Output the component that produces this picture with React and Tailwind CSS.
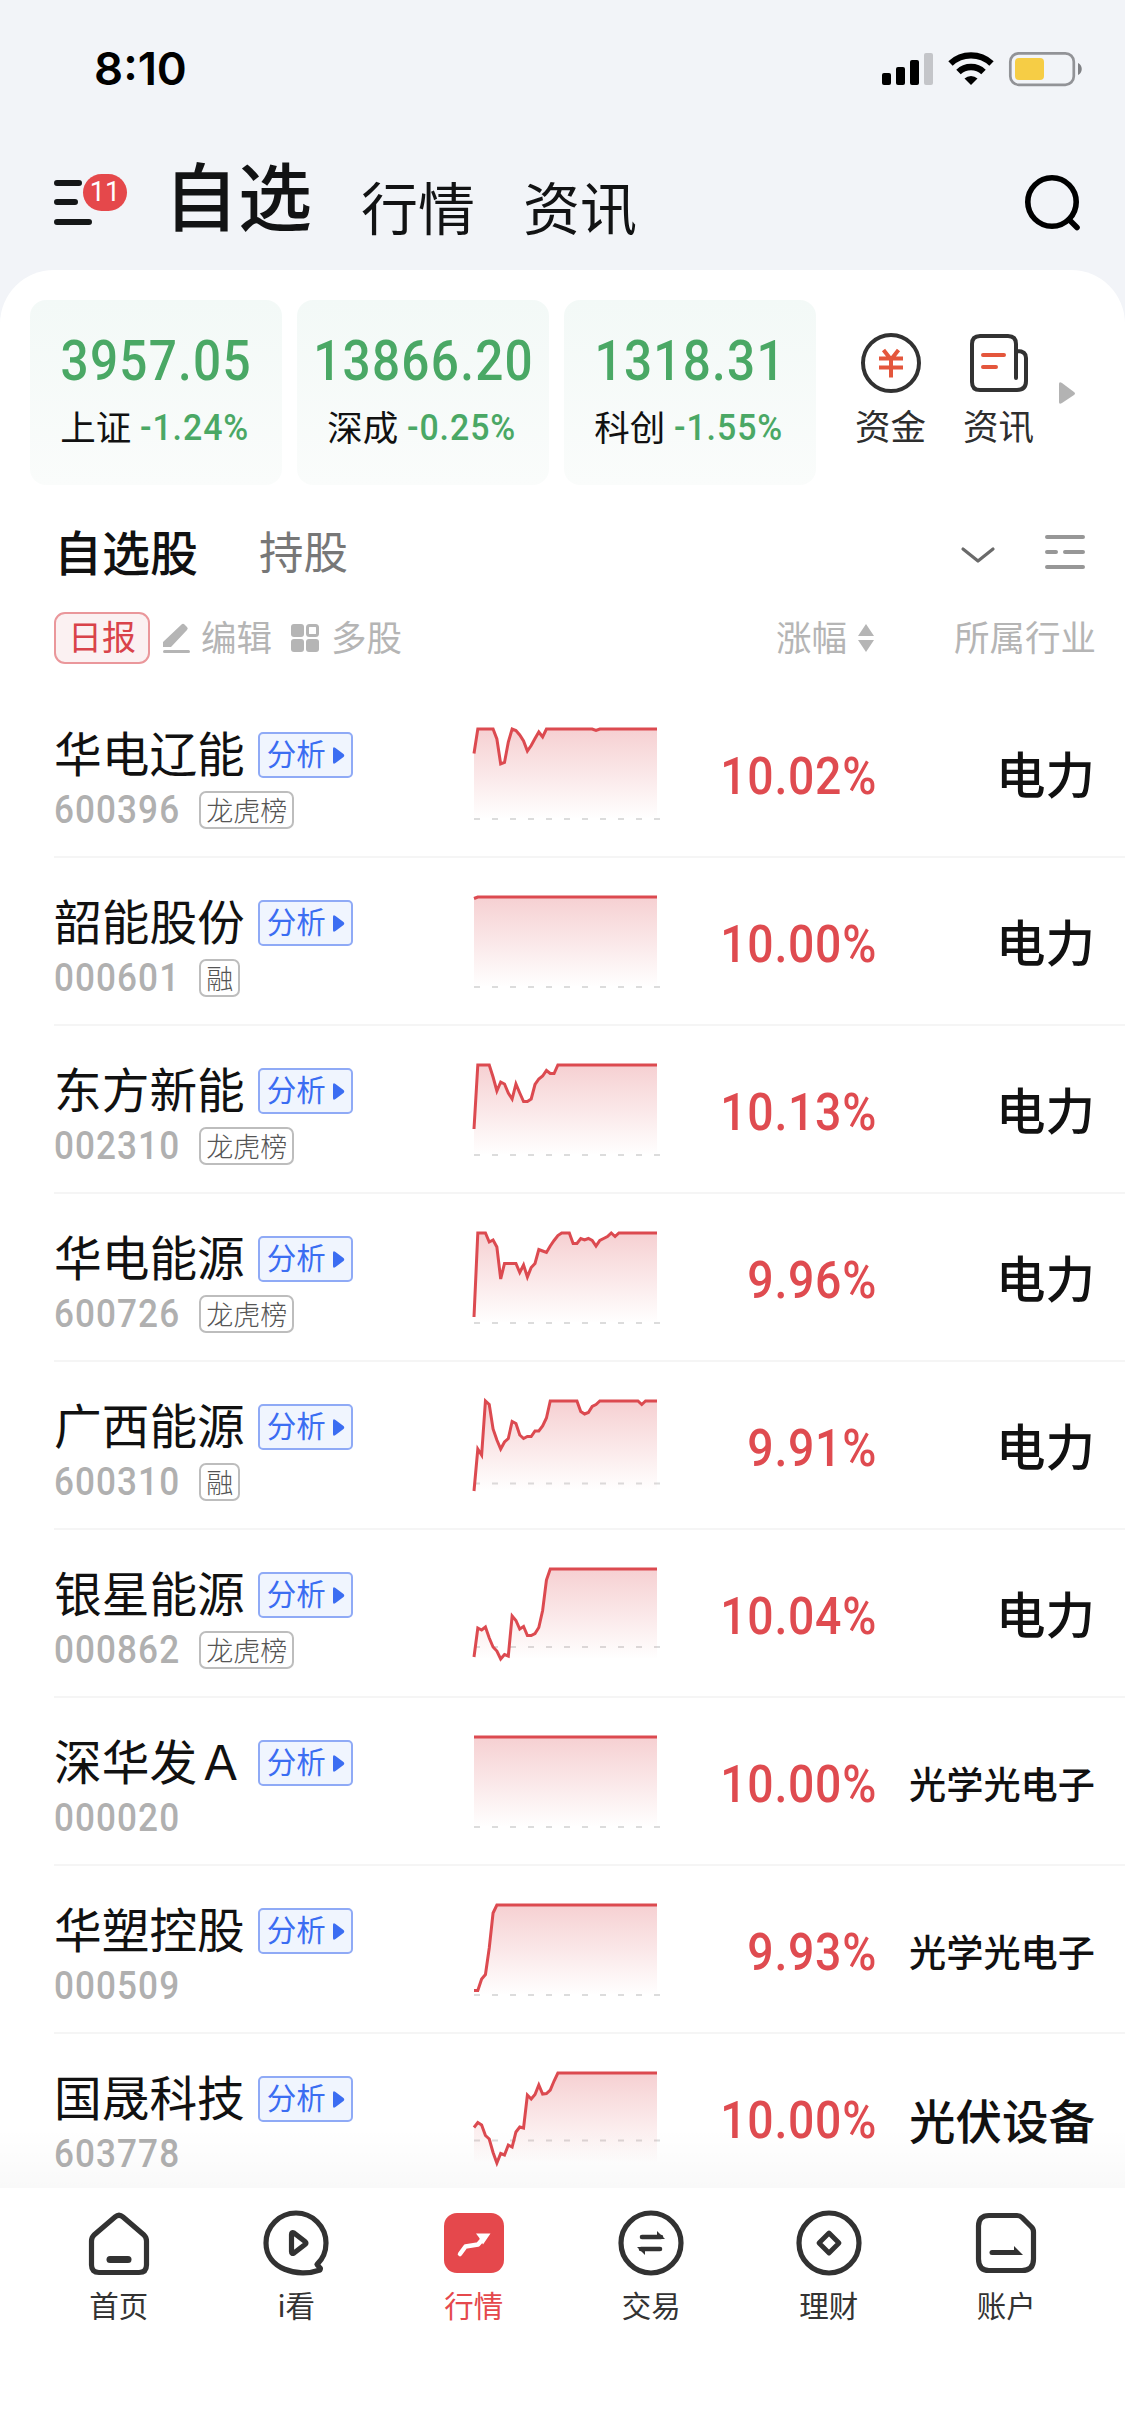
const indices = [
  { name: "上证", value: "3957.05", change: "-1.24%" },
  { name: "深成", value: "13866.20", change: "-0.25%" },
  { name: "科创", value: "1318.31", change: "-1.55%" },
];

// trend: distance below the day's high, one value per 5 minutes.
// Anything after the last value stays at the high.
const stocks = [
  {
    name: "华电辽能",
    code: "600396",
    tag: "龙虎榜",
    change: "10.02%",
    industry: "电力",
    base: 90,
    trend: [
      24.5, 0, 0, 0, 0, 0, 10, 35, 33.5, 13, 0, 1.5, 6, 12, 22, 16.5, 9.5, 3, 8,
      0, 0, 0, 0, 0, 0, 0, 0, 0, 0, 0, 0, 0, 1.5,
    ],
  },
  {
    name: "韶能股份",
    code: "000601",
    tag: "融",
    change: "10.00%",
    industry: "电力",
    base: 90,
    trend: [1.5],
  },
  {
    name: "东方新能",
    code: "002310",
    tag: "龙虎榜",
    change: "10.13%",
    industry: "电力",
    base: 90,
    trend: [
      64, 0, 0, 0, 0, 12, 26, 17, 19, 28, 34, 19, 28, 36.5, 36.5, 34, 19.5, 14,
      11, 5.5, 8.5, 8.5,
    ],
  },
  {
    name: "华电能源",
    code: "600726",
    tag: "龙虎榜",
    change: "9.96%",
    industry: "电力",
    base: 90,
    trend: [
      84, 0, 0, 0, 9, 7, 14, 46, 30.5, 30.5, 30.5, 30.5, 39.5, 32, 44, 34.5,
      30.5, 16.5, 18, 19.5, 13, 7.5, 2.5, 0, 0, 0, 10.5, 10.5, 5.5, 7, 5.5, 7.5,
      13, 7.5, 5.5, 3.5, 0, 3.5,
    ],
  },
  {
    name: "广西能源",
    code: "600310",
    tag: "融",
    change: "9.91%",
    industry: "电力",
    base: 82.5,
    trend: [
      90, 48, 54, 0, 3.5, 28, 39, 48, 41, 37.5, 20.5, 22.5, 34, 37.5, 35.5,
      35.5, 30, 30, 25, 17, 0, 0, 0, 0, 0, 0, 0, 0, 10.5, 13, 11.5, 5.5, 3.5, 0,
      0, 0, 0, 0, 0, 0, 0, 0, 0, 0, 3.5,
    ],
  },
  {
    name: "银星能源",
    code: "000862",
    tag: "龙虎榜",
    change: "10.04%",
    industry: "电力",
    base: 78,
    trend: [
      88, 59, 61, 58, 69, 78, 82, 90, 85.5, 87, 47, 51.5, 60, 57.5, 66.5, 66.5,
      64.5, 58.5, 41.5, 11,
    ],
  },
  {
    name: "深华发Ａ",
    code: "000020",
    change: "10.00%",
    industry: "光学光电子",
    base: 90,
    trend: [0],
  },
  {
    name: "华塑控股",
    code: "000509",
    change: "9.93%",
    industry: "光学光电子",
    base: 90,
    trend: [85.5, 85.5, 74, 69.5, 43, 8],
  },
  {
    name: "国晟科技",
    code: "603778",
    change: "10.00%",
    industry: "光伏设备",
    base: 67.5,
    trend: [
      54.5, 49.5, 52, 62.5, 66, 79.5, 90, 80.5, 82, 72, 74, 59, 54, 55, 22, 26,
      21.5, 12, 21, 20.5, 17, 8,
    ],
  },
];

const industrySize = {
  2: "text-[49.5px]",
  4: "pt-1 text-[46.5px]",
  5: "pt-1.5 text-[37.2px]",
};

const TREND_STEPS = 48;
const TREND_WIDTH = 183;

function TrendChart({ trend, base }) {
  const points = Array.from({ length: TREND_STEPS + 1 }, (_, i) => {
    const x = (i * TREND_WIDTH) / TREND_STEPS;
    return `${x.toFixed(2)},${(trend[i] ?? 0) + 4}`;
  }).join(" ");

  return (
    <svg width="188" height="98" viewBox="0 0 188 98" className="overflow-visible">
      <defs>
        <linearGradient id="trend-fill" gradientUnits="userSpaceOnUse" x1="0" y1="4" x2="0" y2="94">
          <stop offset="0" stopColor="#dc4a50" stopOpacity="0.26" />
          <stop offset="1" stopColor="#dc4a50" stopOpacity="0" />
        </linearGradient>
      </defs>
      <path
        d={`M0 ${base + 4}H186`}
        stroke="#dcdcdc"
        strokeWidth="2"
        strokeDasharray="6 12"
      />
      <polygon points={`0,94 ${points} ${TREND_WIDTH},94`} fill="url(#trend-fill)" />
      <polyline points={points} fill="none" stroke="#dc4a50" strokeWidth="3" />
    </svg>
  );
}

function StatusBar() {
  return (
    <div className="flex h-[138px] items-center justify-between pl-[94px] pr-[42px]">
      <span className="font-['Inter'] text-[45.5px] font-semibold leading-none text-black">
        8:10
      </span>
      <svg width="201" height="36" viewBox="0 0 201 36">
        <rect x="0" y="22" width="9" height="12" rx="2" fill="#000" />
        <rect x="14" y="16" width="9" height="18" rx="2" fill="#000" />
        <rect x="28" y="9" width="9" height="25" rx="2" fill="#000" />
        <rect x="42" y="2" width="9" height="32" rx="2" fill="#c4c5c9" />
        <g fill="none" stroke="#000" strokeWidth="6.4">
          <path d="M68.5 12.5a30 30 0 0 1 41 0" />
          <path d="M76.5 21a18 18 0 0 1 25 0" />
        </g>
        <path d="M89 34l-6.5-6.5a9.5 9.5 0 0 1 13 0z" fill="#000" />
        <rect x="128.3" y="2.3" width="63.5" height="31.5" rx="8.5" fill="none" stroke="#929397" strokeWidth="2.7" />
        <rect x="133" y="7" width="29" height="22" rx="4" fill="#f6cd45" />
        <path d="M196 12c5 2 5 10 0 12z" fill="#808185" />
      </svg>
    </div>
  );
}

function Header() {
  return (
    <header className="flex h-[132px] items-start pl-[54px] pr-[44px]">
      <div className="relative mt-[42px] h-[46px] w-[73px]">
        <svg width="40" height="46" viewBox="0 0 40 46" stroke="#151718" strokeWidth="6" strokeLinecap="round">
          <path d="M3 3h22M3 22h18M3 42h32" />
        </svg>
        <span className="absolute -top-1.5 left-[29px] flex h-[37px] w-[44px] items-center justify-center rounded-full bg-[#e5484b] font-['Roboto'] text-[27px] leading-none text-white">
          11
        </span>
      </div>
      <nav className="flex items-start text-[#121314]">
        <span className="ml-[37px] mt-[18px] text-[74px] font-medium leading-none">自选</span>
        <span className="ml-[49px] mt-[39px] text-[57px] leading-none">行情</span>
        <span className="ml-[48px] mt-[39px] text-[57px] leading-none">资讯</span>
      </nav>
      <svg className="ml-auto mt-9" width="58" height="60" viewBox="0 0 58 60" fill="none" stroke="#000" strokeWidth="5.6">
        <circle cx="29" cy="28" r="24.2" />
        <path d="M46 45.5l8 8" strokeLinecap="round" />
      </svg>
    </header>
  );
}

function IndexCards() {
  return (
    <section className="flex h-[185px] items-start pl-[30px]">
      <div className="flex gap-[15.5px]">
        {indices.map((item) => (
          <div
            key={item.name}
            className="flex h-[185px] w-[251.5px] flex-col items-center rounded-[16px] bg-gradient-to-b from-[#f3f9f7] to-[#fafcfb] pt-[35px]"
          >
            <div className="scale-x-90 pl-0.5 font-['Roboto'] text-[55px] font-medium leading-[52px] tracking-[1.4px] text-[#4aa865]">
              {item.value}
            </div>
            <div className="mt-[15px] flex items-center gap-[9px] leading-[42px]">
              <span className="text-[35.5px] text-[#111]">{item.name}</span>
              <span className="-mr-[5px] origin-left scale-x-[0.94] pt-[5px] font-['Roboto'] text-[36px] font-medium tracking-[1px] text-[#4aa865]">
                {item.change}
              </span>
            </div>
          </div>
        ))}
      </div>
      <div className="ml-[40px] flex whitespace-nowrap text-[35.5px] leading-none text-[#2e2e2e]">
        <div className="flex w-[70px] flex-col items-center pt-[32px]">
          <svg width="62" height="62" viewBox="0 0 62 62" fill="none" strokeWidth="4">
            <circle cx="31" cy="31" r="28" stroke="#323232" />
            <path d="M23.5 18l7.5 9.5 7.5-9.5M31 27v18.5M19 26.5h24M19 35.5h24" stroke="#e4563c" />
          </svg>
          <span className="mt-[13px]">资金</span>
        </div>
        <div className="ml-[38px] flex w-[70px] flex-col items-center pt-[32px]">
          <svg width="62" height="62" viewBox="0 0 62 62" fill="none" strokeWidth="4" strokeLinecap="round">
            <path
              d="M48 46V12q0-8-8-8H12q-8 0-8 8v38q0 8 8 8h37q9 0 9-9V26q0-7-9-7"
              stroke="#323232"
            />
            <path d="M15 23h21M15 35h13" stroke="#e4563c" />
          </svg>
          <span className="mt-[13px]">资讯</span>
        </div>
        <svg className="ml-[25px] mt-[82px]" width="17" height="22" viewBox="0 0 17 22" fill="#b3b3b3">
          <path d="M0 2q0-3 3-1l12 9q2 1.500 0 3l-12 8q-3 2-3-1z" />
        </svg>
      </div>
    </section>
  );
}

function ListTabs() {
  return (
    <div className="mt-[39px] flex h-[56px] items-center pl-[54px] pr-[40px]">
      <span className="pb-[5px] text-[48px] font-medium leading-none text-[#111]">自选股</span>
      <span className="ml-[61px] pb-[3px] text-[44.5px] leading-none text-[#777]">持股</span>
      <svg className="ml-auto mt-1.5" width="36" height="18" viewBox="0 0 36 18" fill="none" stroke="#6a6a6a" strokeWidth="3.2" strokeLinecap="round" strokeLinejoin="round">
        <path d="M3 3l15 12L33 3" />
      </svg>
      <svg className="ml-[49px]" width="40" height="36" viewBox="0 0 40 36" stroke="#979797" strokeWidth="4" strokeLinecap="round">
        <path d="M2 3h36M2 18h9M20 18h18M2 33h36" />
      </svg>
    </div>
  );
}

function ListHead() {
  return (
    <div className="mt-[32px] flex h-[52px] items-center pl-[54px] pr-[29px] text-[35.5px] leading-none text-[#b5b5b5]">
      <span className="flex h-[52px] w-[96px] items-center justify-center rounded-[11px] border-2 border-[#ea979b] bg-[#fbf1f2] pb-1 text-[34px] text-[#d9434a]">
        日报
      </span>
      <svg className="ml-[13px]" width="28" height="30" viewBox="0 0 28 30" fill="#b5b5b5">
        <path d="M0 19L18.500 1.500q1.500-1.500 3 0l2.500 2.500q1.500 1.500 0 3L8 24H0z" />
        <rect x="0" y="27" width="27" height="3" rx="1.500" />
      </svg>
      <span className="ml-[10px] pb-1">编辑</span>
      <svg className="ml-[19px]" width="28" height="28" viewBox="0 0 28 28" fill="#b5b5b5">
        <rect x="0" y="0" width="13" height="13" rx="3" />
        <rect x="0" y="15" width="13" height="13" rx="3" />
        <rect x="15" y="15" width="13" height="13" rx="3" />
        <rect x="16.500" y="1.500" width="10" height="10" rx="2" fill="none" stroke="#b5b5b5" strokeWidth="3" />
      </svg>
      <span className="ml-3 pb-1">多股</span>
      <span className="ml-auto pb-1">涨幅</span>
      <svg className="ml-[11px]" width="16" height="28" viewBox="0 0 16 28" fill="#b5b5b5">
        <path d="M8 0l8 12H0zM8 28l8-12H0z" />
      </svg>
      <span className="w-[222px] pb-1 text-right">所属行业</span>
    </div>
  );
}

function StockRow({ stock }) {
  return (
    <li className="ml-[54px] flex h-[168px] border-b-2 border-[#f5f5f5] pr-[30px]">
      <div className="w-[420px] pt-[42px]">
        <div className="flex h-[46px] items-center">
          <span className="pb-[7px] text-[47.7px] leading-none text-[#111]">{stock.name}</span>
          <span className="ml-[13px] flex h-[46px] w-[95px] items-center rounded-[5px] border-2 border-[#8faaf6] bg-[#f0f5fe] pl-[7px] text-[29.5px] leading-none text-[#3b6df2]">
            <span className="pb-1">分析</span>
            <svg className="ml-[7px]" width="12" height="17" viewBox="0 0 12 17" fill="#3b6df2">
              <path d="M0 2q0-3 2.500-1l8 6q1.500 1.500 0 3l-8 6q-2.500 2-2.500-1z" />
            </svg>
          </span>
        </div>
        <div className="mt-3 flex h-[40px] items-center">
          <span className="-mr-[14px] origin-left scale-x-90 pt-px font-['Roboto'] text-[39px] font-medium leading-none tracking-[1.2px] text-[#b0b0b0]">
            {stock.code}
          </span>
          {stock.tag && (
            <span className="ml-[19px] flex h-[38px] items-center rounded-[7px] border-2 border-[#bdbdbd] px-[5px] pb-0.5 text-[27px] font-light leading-none text-[#555]">
              {stock.tag}
            </span>
          )}
        </div>
      </div>
      <div className="pt-[35px]">
        <TrendChart trend={stock.trend} base={stock.base} />
      </div>
      <div className="-mr-0.5 flex flex-1 origin-right scale-x-90 items-center justify-end pt-[7px] font-['Roboto'] text-[51.5px] font-medium leading-none tracking-[0.8px] text-[#df4b50]">
        {stock.change}
      </div>
      <div className="flex w-[220px] items-center justify-end font-medium leading-none text-[#111]">
        <span className={industrySize[stock.industry.length]}>{stock.industry}</span>
      </div>
    </li>
  );
}

const iconProps = {
  width: 68,
  height: 68,
  viewBox: "0 0 68 68",
  fill: "none",
  stroke: "#323232",
  strokeWidth: 5.2,
  strokeLinecap: "round",
  strokeLinejoin: "round",
};

const navItems = [
  {
    label: "首页",
    icon: (
      <svg {...iconProps}>
        <path d="M30 8q4-3.500 8 0L59 26q2.500 2.500 2.500 6v24q0 7.500-7.500 7.500H14q-7.500 0-7.500-7.500V32q0-3.500 2.500-6z" />
        <path d="M25 50.500h18" strokeWidth="7" />
      </svg>
    ),
  },
  {
    label: "i看",
    icon: (
      <svg {...iconProps}>
        <path d="M58 61C36 69 4 60 4 34A30 30 0 0 1 64 34q0 13-9 21.500l3.500 4z" />
        <path d="M29.500 25.500q0-3 2.500-1.500l11 8.500q2 1.500 0 3L32 44q-2.500 1.500-2.500-1.500z" />
      </svg>
    ),
  },
  {
    label: "行情",
    active: true,
    icon: (
      <svg width="68" height="68" viewBox="0 0 68 68">
        <rect x="4" y="4" width="60" height="60" rx="13" fill="#e5484c" />
        <path d="M20 45l5.500-7.500 12.500-2L45 27.500" fill="none" stroke="#fff" strokeWidth="4.500" strokeLinecap="round" strokeLinejoin="round" />
        <path d="M36 24.500h14.500L43 35.500l-4-7z" fill="#fff" />
      </svg>
    ),
  },
  {
    label: "交易",
    icon: (
      <svg {...iconProps}>
        <circle cx="34" cy="34" r="30" />
        <path d="M25 28h19M24 40h19" strokeWidth="4.600" />
        <path d="M40 22l8 8h-8zM28 46l-8-8h8z" fill="#323232" stroke="none" />
      </svg>
    ),
  },
  {
    label: "理财",
    icon: (
      <svg {...iconProps}>
        <circle cx="34" cy="34" r="30" />
        <path d="M34 24l10 10-10 10-10-10z" strokeWidth="4.800" />
      </svg>
    ),
  },
  {
    label: "账户",
    icon: (
      <svg {...iconProps}>
        <path d="M17 6.500h28q3 0 5 2l9 9q2.500 2 2.500 5.500V50q0 11.500-11.500 11.500H17Q6.500 61.500 6.500 50V17Q6.500 6.500 17 6.500z" />
        <path d="M20 43.500h23" strokeWidth="5" />
        <path d="M42 37l9 9h-9z" fill="#323232" stroke="none" />
      </svg>
    ),
  },
];

function BottomNav() {
  return (
    <nav className="relative h-[248px] shrink-0 bg-white px-[30px] pt-[21px]">
      <div className="absolute inset-x-0 bottom-full h-[60px] bg-gradient-to-b from-transparent to-black/[0.024]" />
      <div className="grid grid-cols-6">
        {navItems.map((item) => (
          <div key={item.label} className="flex flex-col items-center gap-[13px]">
            {item.icon}
            <span
              className={
                item.active
                  ? "text-[29.5px] leading-none text-[#e5484c]"
                  : "text-[29.5px] leading-none text-[#333]"
              }
            >
              {item.label}
            </span>
          </div>
        ))}
      </div>
    </nav>
  );
}

export default function App() {
  return (
    <div className="flex h-[2436px] w-[1125px] flex-col overflow-hidden bg-[#f2f4f8] font-['Noto_Sans_CJK_SC','Noto_Sans',sans-serif]">
      <StatusBar />
      <Header />
      <main className="min-h-0 flex-1 overflow-hidden rounded-t-[54px] bg-white pt-[30px]">
        <IndexCards />
        <ListTabs />
        <ListHead />
        <ul className="mt-[26px]">
          {stocks.map((stock) => (
            <StockRow key={stock.code} stock={stock} />
          ))}
        </ul>
      </main>
      <BottomNav />
    </div>
  );
}
